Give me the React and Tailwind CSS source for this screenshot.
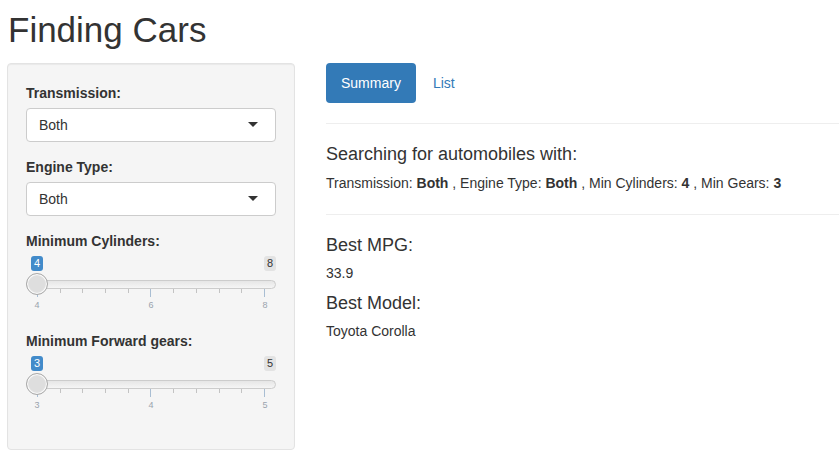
import React from 'react';

const font = { fontFamily: '"Liberation Sans", Arial, sans-serif' };

function Select({ value }) {
  return (
    <div className="relative h-[34px] rounded border border-[#cccccc] bg-white flex items-center pl-3 text-sm text-[#333]">
      {value}
      <span className="absolute right-[17px] top-[13px] w-0 h-0 border-l-[5px] border-r-[5px] border-t-[5px] border-l-transparent border-r-transparent border-t-[#333]" />
    </div>
  );
}

function Slider({ min, max, value, mid }) {
  const ticks = Array.from({ length: 11 }, (_, i) => i);
  return (
    <div className="relative h-[65px]">
      <div className="absolute left-[5px] top-[5px] h-[15px] px-[3px] rounded-[3px] bg-[#428bca] text-white text-[11px] leading-[15px]">{value}</div>
      <div className="absolute right-0 top-[5px] h-[15px] px-[3px] rounded-[3px] bg-[#e3e3e3] text-[#333] text-[11px] leading-[15px]">{max}</div>
      <div className="absolute left-0 right-0 top-[29px] h-[9px] rounded-full border border-[#cccccc] bg-gradient-to-b from-[#e6e6e6] to-[#f5f5f5]" />
      <div className="absolute left-[11px] right-[11px] top-[38px] flex justify-between">
        {ticks.map((i) => (
          <div key={i} className={i % 5 === 0 ? 'w-px h-[8px] bg-[#a9bed3]' : 'w-px h-[4px] bg-[#c3c3c3]'} />
        ))}
      </div>
      <div className="absolute left-[5px] right-[5px] top-[49px] flex justify-between text-[9px] leading-[11px] text-[#9aa3ad]">
        <span className="w-3 text-center">{min}</span>
        <span className="w-3 text-center">{mid}</span>
        <span className="w-3 text-center">{max}</span>
      </div>
      <div className="absolute left-0 top-[22px] w-[22px] h-[22px] rounded-full border border-[#aaaaaa] bg-[#dedede] shadow-[inset_0_0_1px_1px_#fff]" />
    </div>
  );
}

export default function App() {
  return (
    <div className="min-h-screen bg-white pl-[7px] text-[#333]" style={font}>
      <h1 className="pt-[10px] mb-[13px] pl-px text-[35px] leading-[40px] font-normal">Finding Cars</h1>
      <div className="flex gap-[31px]">
        <div className="w-[288px] shrink-0 h-[387px] rounded border border-[#e3e3e3] bg-[#f5f5f5] shadow-[inset_0_1px_1px_rgba(0,0,0,0.05)] px-[18px] pt-[19px]">
          <div className="mb-[15px]">
            <div className="text-sm font-bold leading-5 mb-[5px]">Transmission:</div>
            <Select value="Both" />
          </div>
          <div className="mb-[15px]">
            <div className="text-sm font-bold leading-5 mb-[5px]">Engine Type:</div>
            <Select value="Both" />
          </div>
          <div className="mb-[15px]">
            <div className="text-sm font-bold leading-5">Minimum Cylinders:</div>
            <Slider min="4" mid="6" max="8" value="4" />
          </div>
          <div>
            <div className="text-sm font-bold leading-5">Minimum Forward gears:</div>
            <Slider min="3" mid="4" max="5" value="3" />
          </div>
        </div>
        <div className="flex-1">
          <div className="flex gap-[2px] text-sm leading-5">
            <div className="bg-[#337ab7] text-white rounded px-[15px] py-[10px]">Summary</div>
            <div className="text-[#337ab7] px-[15px] py-[10px]">List</div>
          </div>
          <div className="mt-5 border-t border-[#eeeeee]" />
          <h4 className="mt-5 text-[18px] leading-[20px] mb-[9px]">Searching for automobiles with:</h4>
          <p className="text-sm leading-5">
            Transmission: <b>Both</b> , Engine Type: <b>Both</b> , Min Cylinders: <b>4</b> , Min Gears: <b>3</b>
          </p>
          <div className="mt-[21px] border-t border-[#eeeeee]" />
          <h4 className="mt-5 text-[18px] leading-[20px] mb-2">Best MPG:</h4>
          <div className="text-sm leading-5 mb-[10px]">33.9</div>
          <h4 className="text-[18px] leading-[20px] mb-2">Best Model:</h4>
          <div className="text-sm leading-5">Toyota Corolla</div>
        </div>
      </div>
    </div>
  );
}
